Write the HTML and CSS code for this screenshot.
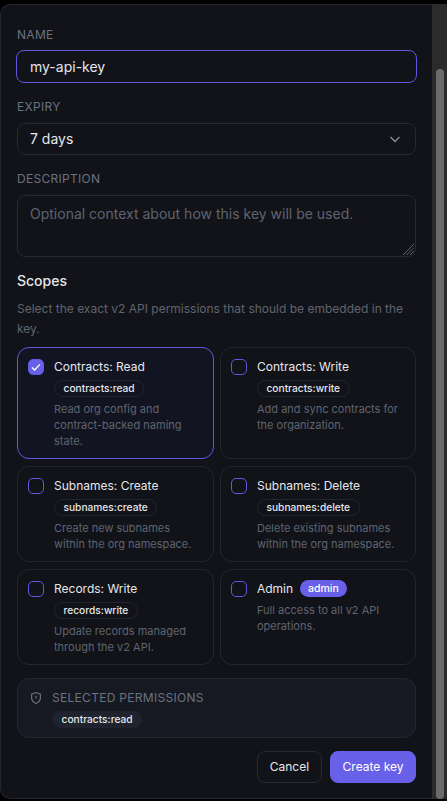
FILE: index.html
```html
<!DOCTYPE html>
<html lang="en">
<head>
    <meta charset="UTF-8">
    <title>Create API key</title>
    <link rel="stylesheet" href="styles.css">
</head>
<body>
    <div class="window">
        <div class="dialog">
            <p class="intro">Create and give it a key name that will then show up in the list.</p>

            <label class="field-label field-first">Name</label>
            <div class="input input-focus">my-api-key</div>

            <label class="field-label">Expiry</label>
            <div class="input select">
                <span>7 days</span>
                <svg class="chevron" viewBox="0 0 16 16"><path d="M3.500 6l4.500 4.500L12.500 6"/></svg>
            </div>

            <label class="field-label">Description</label>
            <div class="input textarea">
                <span class="placeholder">Optional context about how this key will be used.</span>
                <svg class="grip" viewBox="0 0 12 12"><path d="M1 12L12 1M4.500 12L12 4.500M8 12l4-4"/></svg>
            </div>

            <h2 class="scopes-title">Scopes</h2>
            <p class="scopes-help">Select the exact v2 API permissions that should be embedded in the key.</p>

            <div class="scopes">
                <div class="scope scope-on">
                    <span class="check check-on">
                        <svg viewBox="0 0 16 16"><path d="M3.500 8.500l3 3 6-6.500"/></svg>
                    </span>
                    <div class="scope-body">
                        <div class="scope-name">Contracts: Read</div>
                        <span class="chip">contracts:read</span>
                        <p class="scope-desc">Read org config and contract-backed naming state.</p>
                    </div>
                </div>
                <div class="scope">
                    <span class="check"></span>
                    <div class="scope-body">
                        <div class="scope-name">Contracts: Write</div>
                        <span class="chip">contracts:write</span>
                        <p class="scope-desc">Add and sync contracts for the organization.</p>
                    </div>
                </div>
                <div class="scope">
                    <span class="check"></span>
                    <div class="scope-body">
                        <div class="scope-name">Subnames: Create</div>
                        <span class="chip">subnames:create</span>
                        <p class="scope-desc">Create new subnames within the org namespace.</p>
                    </div>
                </div>
                <div class="scope">
                    <span class="check"></span>
                    <div class="scope-body">
                        <div class="scope-name">Subnames: Delete</div>
                        <span class="chip">subnames:delete</span>
                        <p class="scope-desc">Delete existing subnames within the org namespace.</p>
                    </div>
                </div>
                <div class="scope">
                    <span class="check"></span>
                    <div class="scope-body">
                        <div class="scope-name">Records: Write</div>
                        <span class="chip">records:write</span>
                        <p class="scope-desc">Update records managed through the v2 API.</p>
                    </div>
                </div>
                <div class="scope">
                    <span class="check"></span>
                    <div class="scope-body">
                        <div class="scope-name">Admin <span class="badge">admin</span></div>
                        <p class="scope-desc">Full access to all v2 API operations.</p>
                    </div>
                </div>
            </div>

            <div class="summary">
                <svg class="shield" viewBox="0 0 16 16">
                    <path d="M8 1.800l5 1.800v4c0 3.200-2.100 5.300-5 6.600-2.900-1.300-5-3.400-5-6.600v-4z"/>
                    <path d="M8 5.300v3.200M8 10.600v.1"/>
                </svg>
                <div>
                    <div class="summary-title">Selected permissions</div>
                    <span class="chip chip-fill">contracts:read</span>
                </div>
            </div>

            <div class="actions">
                <button class="btn" type="button">Cancel</button>
                <button class="btn btn-primary" type="button">Create key</button>
            </div>
        </div>
        <div class="scrollbar"><div class="thumb"></div></div>
    </div>
</body>
</html>
```

FILE: styles.css
```css
* {box-sizing: border-box;}
html, body {margin: 0; height: 100%; background: #000;}
body {font-family: Inter, "Noto Sans", sans-serif; color: #e5e7eb; overflow: hidden;}

.window {display: flex; height: 801px; padding-top: 4px;}
.dialog {width: 432px; height: 795px; padding: 0 16px; background: #111318; border: 1px solid #23262f; border-right: none; border-radius: 10px 0 0 10px; overflow: hidden;}
.scrollbar {width: 15px; height: 795px; padding: 65px 3px 0 4px; background: #2b2b2b;}
.thumb {height: 100%; border-radius: 4px; background: #6b6b6b;}

.intro {margin: -16px 0 0; height: 17px; font-size: 13px; line-height: 17px; color: #6b7280; white-space: nowrap; overflow: hidden;}

.field-label {display: block; margin: 16px 0 8px; font-size: 12px; line-height: 16px; letter-spacing: 0.3px; text-transform: uppercase; color: #6b7280;}
.field-first {margin-top: 21px;}
.input {height: 32px; padding: 0 12px; background: #111318; border: 1px solid #262933; border-radius: 8px; font-size: 14px; line-height: 30px; color: #e5e7eb;}
.input-focus {height: 33px; margin: -1px -1px 0; padding: 0 13px; border-color: #5f58e0; line-height: 31px;}
.select {display: flex; align-items: center; justify-content: space-between; padding-right: 12px;}
.chevron {width: 16px; height: 16px; fill: none; stroke: #8b909b; stroke-width: 1.300;}
.textarea {position: relative; height: 62px; padding-top: 3px;}
.placeholder {color: #5f6470;}
.grip {position: absolute; right: 1px; bottom: 1px; width: 12px; height: 12px; fill: none; stroke: #6b7280; stroke-width: 0.800;}

.scopes-title {margin: 14px 0 0; font-size: 14px; line-height: 20px; font-weight: 500; color: #e5e7eb;}
.scopes-help {margin: 7.500px 0 8.400px; font-size: 12px; line-height: 20px; color: #5f6470;}

.scopes {display: grid; grid-template-columns: 196.600px 1fr; gap: 6.400px;}
.scope {display: flex; gap: 10px; padding: 10.500px 10px 9.600px; border: 1px solid #23262f; border-radius: 12px;}
.scope-on {background: #121521; border-color: #5f58e0;}
.check {flex: none; width: 16px; height: 16px; margin-top: .5px; border: 1px solid #5f58e0; border-radius: 5px;}
.check-on {background: #6860e8;}
.check-on svg {display: block; width: 14px; height: 14px; fill: none; stroke: #fff; stroke-width: 1.500;}
.scope-body {min-width: 0;}
.scope-name {font-size: 12px; line-height: 18px; color: #e5e7eb;}
.scope-desc {margin: 3.500px 0 0; font-size: 11px; line-height: 16px; color: #5f6470;}

.chip {display: inline-block; margin-top: 4px; padding: 0 8.500px; height: 17px; border: 1px solid #23262f; border-radius: 9px; font-size: 10.200px; line-height: 15px; font-weight: 500; color: #e5e7eb; vertical-align: top;}
.chip-fill {background: #20232d; border-color: #20232d;}
.badge {display: inline-block; margin-left: 3px; padding: 0 8.500px; height: 17px; border-radius: 9px; background: #6860e8; font-size: 10.500px; line-height: 17px; font-weight: 500; color: #fff; vertical-align: top;}

.summary {display: flex; gap: 9px; height: 60.400px; margin-top: 12.600px; padding: 11px; background: #161922; border: 1px solid #23262f; border-radius: 12px;}
.shield {flex: none; width: 14px; height: 14px; margin-top: 1px; fill: none; stroke: #6b7280; stroke-width: 1.300;}
.summary-title {font-size: 12px; line-height: 16px; letter-spacing: 0.3px; text-transform: uppercase; color: #6b7280;}
.summary .chip {margin-top: 5px;}

.actions {display: flex; justify-content: flex-end; gap: 8px; margin-top: 12.300px;}
.btn {height: 32px; padding: 0 12px; background: transparent; border: 1px solid #262933; border-radius: 8px; font-family: inherit; font-size: 12px; color: #e5e7eb;}
.btn-primary {padding: 0 11.500px; background: #6860e8; border-color: #6860e8; color: #fff;}
```
